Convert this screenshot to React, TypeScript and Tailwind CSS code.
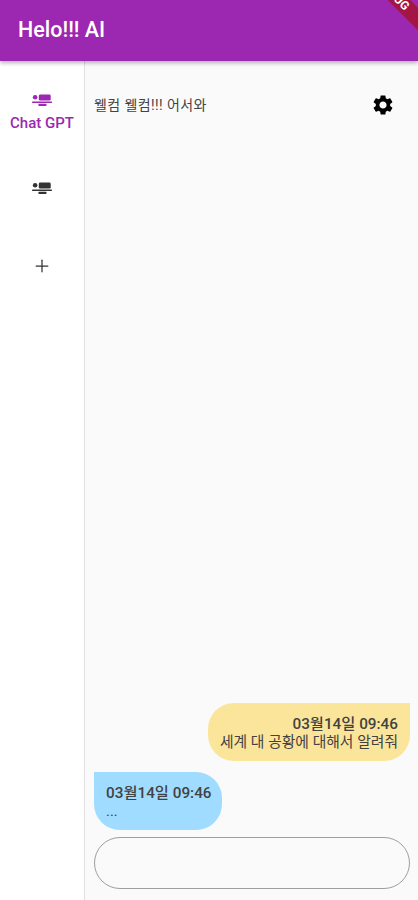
import { Plus } from 'lucide-react';

const fontStack = 'font-["Roboto","Noto_Sans_CJK_KR",sans-serif]';

function ModelIcon({ className }: { className: string }) {
    return (
        <svg viewBox="0 0 24 16" className={className} fill="currentColor">
            <circle cx="4.5" cy="4.5" r="2.5" />
            <rect x="8.5" y="1.5" width="13" height="6.5" rx="1.5" />
            <rect x="1" y="9" width="22" height="1.8" rx="0.9" />
            <rect x="8" y="11.5" width="9" height="2.5" rx="1" />
        </svg>
    );
}

function GearIcon() {
    return (
        <svg viewBox="0 0 24 24" className="h-6 w-6 text-black" fill="currentColor">
            <path d="M19.14 12.94c.04-.3.06-.61.06-.94 0-.32-.02-.64-.07-.94l2.03-1.58a.49.49 0 0 0 .12-.61l-1.92-3.32a.488.488 0 0 0-.59-.22l-2.39.96c-.5-.38-1.03-.7-1.62-.94l-.36-2.54a.484.484 0 0 0-.48-.41h-3.84c-.24 0-.43.17-.47.41l-.36 2.54c-.59.24-1.13.57-1.62.94l-2.39-.96c-.22-.08-.47 0-.59.22L2.74 8.87c-.12.21-.08.47.12.61l2.03 1.58c-.05.3-.09.63-.09.94s.02.64.07.94l-2.03 1.58a.49.49 0 0 0-.12.61l1.92 3.32c.12.22.37.29.59.22l2.39-.96c.5.38 1.03.7 1.62.94l.36 2.54c.05.24.24.41.48.41h3.84c.24 0 .44-.17.47-.41l.36-2.54c.59-.24 1.13-.56 1.62-.94l2.39.96c.22.08.47 0 .59-.22l1.92-3.32c.12-.22.07-.47-.12-.61l-2.01-1.58zM12 15.6c-1.98 0-3.6-1.62-3.6-3.6s1.62-3.6 3.6-3.6 3.6 1.62 3.6 3.6-1.62 3.6-3.6 3.6z" />
        </svg>
    );
}

export default function App() {
    return (
        <div className={`relative flex h-[900px] w-[418px] flex-col overflow-hidden bg-[#fafafa] ${fontStack}`}>
            {/* App bar */}
            <header className="z-10 flex h-[61px] shrink-0 items-center bg-[#9c27b0] pl-[18px] shadow-[0_2px_4px_rgba(0,0,0,0.3)]">
                <h1 className="text-[21.5px] font-medium text-white">Helo!!! AI</h1>
            </header>

            {/* Debug banner */}
            <div className="absolute right-[-35px] top-[-9px] z-20 flex h-[16px] w-[110px] rotate-45 items-center justify-center bg-[#a31545] pr-[12px]">
                <span className="text-[12px] font-bold leading-none text-white">DEBUG</span>
            </div>

            <div className="flex min-h-0 flex-1">
                {/* Navigation rail */}
                <nav className="flex w-[85px] shrink-0 flex-col items-center border-r border-[#e0e0e0] bg-white pt-[32px]">
                    <ModelIcon className="h-[15px] w-[22px] text-[#9c27b0]" />
                    <span className="mt-[5px] text-[15px] font-medium leading-[20px] text-[#9c27b0]">Chat GPT</span>
                    <ModelIcon className="mt-[48px] h-[15px] w-[22px] text-[#333333]" />
                    <Plus className="mt-[60px] h-[20px] w-[20px] text-[#333333]" strokeWidth={1.5} />
                </nav>

                {/* Chat */}
                <main className="flex min-w-0 flex-1 flex-col pb-[11px] pl-[9px] pr-[8px]">
                    <div className="mt-[32px] flex items-center justify-between pr-[15px]">
                        <span className="text-[14px] leading-[24px] tracking-[0.4px] text-[#424242]">웰컴 웰컴!!! 어서와</span>
                        <GearIcon />
                    </div>

                    <div className="flex-1" />

                    <div className="flex flex-col gap-[11px]">
                        <div className="self-end rounded-[26px] rounded-tr-none bg-[#fbe59b] px-[12px] pb-[10px] pt-[12px] text-right leading-[18px] text-[#424242]">
                            <p className="text-[15.3px] font-medium">03월14일 09:46</p>
                            <p className="text-[14.8px]">세계 대 공황에 대해서 알려줘</p>
                        </div>
                        <div className="self-start rounded-[26px] rounded-tl-none bg-[#a0dcff] pb-[10px] pl-[12px] pr-[10px] pt-[12px] leading-[18px] text-[#424242]">
                            <p className="text-[15.3px] font-medium">03월14일 09:46</p>
                            <p className="text-[14.8px]">...</p>
                        </div>
                        <input
                            aria-label="message"
                            className="mt-[-4px] h-[52px] w-full rounded-[26px] border border-[#9e9e9e] bg-transparent px-4 outline-none"
                        />
                    </div>
                </main>
            </div>
        </div>
    );
}
